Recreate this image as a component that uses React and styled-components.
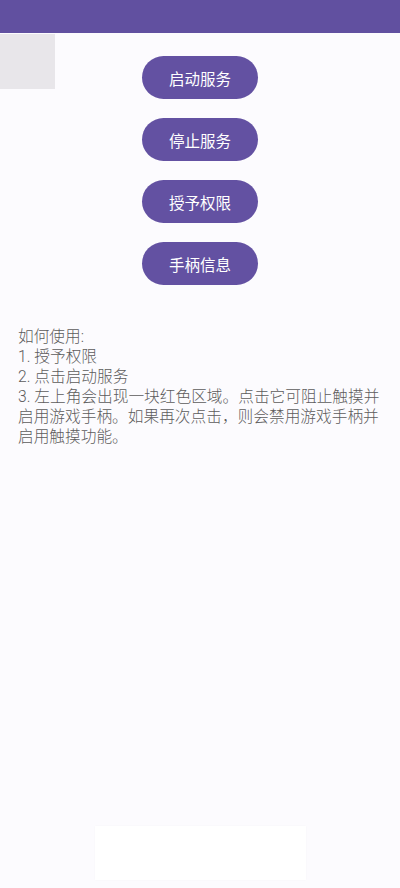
import React from "react";
import styled, { createGlobalStyle } from "styled-components";

const GlobalStyle = createGlobalStyle`
  html, body {
    margin: 0;
    padding: 0;
    background-color: #fcfbfe;
  }
  #root {
    min-height: 100vh;
  }
`;

const Page = styled.div`
  position: relative;
  min-height: 100vh;
  display: flex;
  flex-direction: column;
  background-color: #fcfbfe;
  font-family: "Roboto", "Noto Sans CJK SC", "Noto Sans", sans-serif;
`;

const TopBar = styled.div`
  height: 33px;
  background-color: #6150a0;
  flex-shrink: 0;
`;

const Overlay = styled.div`
  position: absolute;
  top: 34px;
  left: 0;
  width: 55px;
  height: 55px;
  background-color: #e8e6ea;
`;

const ButtonList = styled.div`
  display: flex;
  flex-direction: column;
  align-items: center;
  gap: 19px;
  margin-top: 23px;
`;

const Button = styled.button`
  width: 116px;
  height: 43px;
  border: none;
  border-radius: 22px;
  background-color: #6351a2;
  color: #fff;
  font-family: inherit;
  font-size: 15.5px;
  padding: 0;
  cursor: pointer;
`;

const Instructions = styled.div`
  margin-top: 42px;
  padding: 0 12px 0 18px;
  color: #5c5c5c;
  font-size: 15.7px;
  font-weight: 300;
  line-height: 20px;
`;

const Line = styled.div``;

const BottomPanel = styled.div`
  margin: auto auto 8px;
  width: 211px;
  height: 54px;
  background-color: #ffffff;
  box-shadow: 0 0 2px rgba(0, 0, 0, 0.03);
`;

const buttons = ["启动服务", "停止服务", "授予权限", "手柄信息"];

const App = () => {
  return (
    <Page>
      <GlobalStyle />
      <TopBar />
      <Overlay />
      <ButtonList>
        {buttons.map((label) => (
          <Button key={label}>{label}</Button>
        ))}
      </ButtonList>
      <Instructions>
        <Line>如何使用:</Line>
        <Line>1. 授予权限</Line>
        <Line>2. 点击启动服务</Line>
        <Line>
          3. 左上角会出现一块红色区域。点击它可阻止触摸并启用游戏手柄。如果再次点击，则会禁用游戏手柄并启用触摸功能。
        </Line>
      </Instructions>
      <BottomPanel />
    </Page>
  );
};

export default App;
